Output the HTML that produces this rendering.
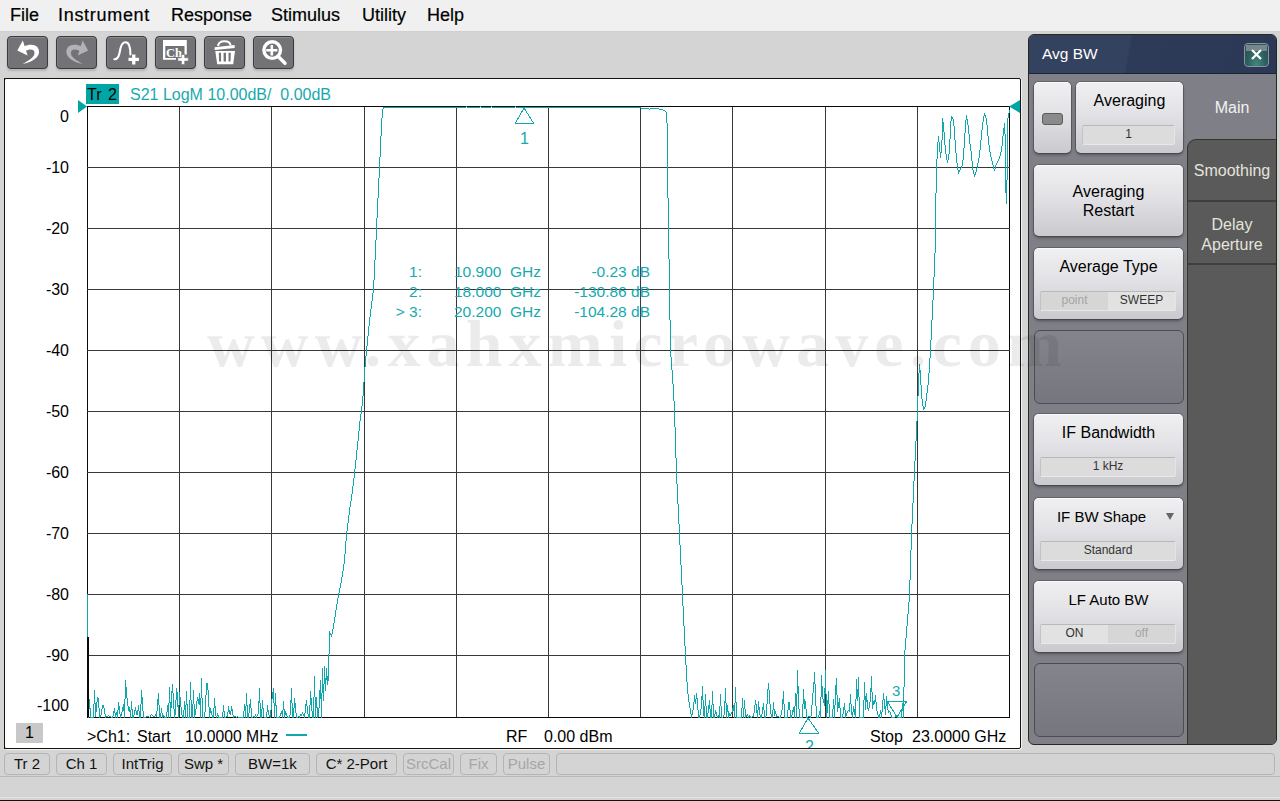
<!DOCTYPE html>
<html><head><meta charset="utf-8">
<style>
*{box-sizing:border-box}
html,body{margin:0;padding:0}
body{width:1280px;height:801px;position:relative;overflow:hidden;background:#d4d4d4;font-family:"Liberation Sans",sans-serif}
.abs{position:absolute}
#menu{position:absolute;left:0;top:0;width:1280px;height:31px;background:#f0f0f0}
#menu span{position:absolute;top:5px;font-size:18px;color:#000;white-space:nowrap;-webkit-text-stroke:0.2px #000}
.tb{position:absolute;top:36px;width:41px;height:33px;border-radius:4px;background:#737377;border:1px solid #3a3a3c;box-shadow:inset 0 1px 0 #8e8e92, inset 1px 0 0 #7e7e82, 0 2px 2px rgba(0,0,0,.15)}
.tb svg{position:absolute;left:0;top:0}
#chart{position:absolute;left:4px;top:78px;width:1017px;height:671px;background:#fff;border:1px solid #14140a;border-radius:2px;box-shadow:1px 1px 0 #f4f4f4}
.yl{position:absolute;left:20px;width:49px;text-align:right;font-size:16px;line-height:18px;color:#000}
.teal{color:#17a9b0}
.bt{position:absolute;top:728px;font-size:16px;line-height:18px;white-space:pre;color:#000}
#status .sb{position:absolute;top:753px;height:22px;border:1px solid #b4b4b4;border-radius:4px;background:#d4d4d4;font-size:15px;line-height:20px;text-align:center;color:#111}
#status .dis{color:#a6a6a6}
#panel{position:absolute;left:1028px;top:34px;width:249px;height:711px;background:#7f7f87;border:1px solid #2a2a1c;border-radius:6px;overflow:hidden}
#phead{position:absolute;left:0;top:0;width:247px;height:39px;background:linear-gradient(100deg,#33425f 0%,#33425f 40%,#2d3b58 41%,#2b3956 100%);border-bottom:1px solid #1d2436}
.pb{position:absolute;left:5px;width:149px;height:71px;border-radius:5px;background:linear-gradient(#f0f0f2 0%,#e2e2e6 45%,#cacace 100%);box-shadow:inset 0 1px 0 #fafafa, 0 2px 3px rgba(30,30,36,.45), 0 0 0 1px rgba(80,80,88,.6);font-size:16px;color:#000;text-align:center}
.pbd{position:absolute;left:5px;width:150px;height:74px;border-radius:6px;background:linear-gradient(#84848c,#76767e);border:1px solid #4c4c52}
.fld{position:absolute;left:6px;width:136px;height:20px;background:#dcdcdc;border:1px solid;border-color:#b8b8b8 #e4e4e4 #e8e8e8 #c2c2c2;border-radius:2px;font-size:12px;line-height:17px;color:#333}
.tabs{position:absolute;left:158px;width:90px;background:#5a5a5a;color:#e4e4dc;font-size:16px;text-align:center}
</style></head><body>
<div id="menu">
<span style="left:10px">File</span>
<span style="left:58px;letter-spacing:0.7px">Instrument</span>
<span style="left:171px">Response</span>
<span style="left:271px">Stimulus</span>
<span style="left:362px">Utility</span>
<span style="left:427px">Help</span>
</div>
<div style="position:absolute;left:0;top:31px;width:1280px;height:1px;background:#d0d0d0"></div>

<div class="tb" style="left:7px"></div>
<div class="tb" style="left:56px"></div>
<div class="tb" style="left:106px"></div>
<div class="tb" style="left:155px"></div>
<div class="tb" style="left:204px"></div>
<div class="tb" style="left:253px"></div>
<svg class="abs" style="left:0;top:0" width="300" height="78">
<path d="M17.3 50.4 L22.8 40.5 L27.6 55.5 Z" fill="#fff"/>
<path d="M23.5 46.5 C33 42.5 39.5 46 39 52.5 C38.5 58 32 62 22.5 64 C29 60.5 34.5 57 34.5 53 C34.5 49 30 48.5 25.5 51 Z" fill="#fff"/>
<path d="M88.1 50.4 L82.6 40.5 L77.8 55.5 Z" fill="#b3b3b5"/>
<path d="M81.9 46.5 C72.4 42.5 65.9 46 66.4 52.5 C66.9 58 73.4 62 82.9 64 C76.4 60.5 70.9 57 70.9 53 C70.9 49 75.4 48.5 79.9 51 Z" fill="#b3b3b5"/>
<path d="M114.4 59.3 C117.5 59.3 119 57 120.3 49 C121.5 43.5 123.5 42.3 125.5 42.3 C128.5 42.3 130.3 45 130.4 54.5" stroke="#fff" stroke-width="2.1" fill="none" stroke-linecap="round"/>
<path d="M132.1 54.5 h3.3 v3.3 h3.5 v3.3 h-3.5 v3.4 h-3.3 v-3.4 h-3.6 v-3.3 h3.6 z" fill="#fff"/>
<path d="M163 40 h23.8 v14.5 h-2.3 v-8.5 h-19.2 v11.9 h10.7 v1.9 h-13 z" fill="#fff"/>
<text x="166" y="56.8" font-family="Liberation Serif" font-weight="bold" font-size="12.5" fill="#fff" textLength="16" lengthAdjust="spacingAndGlyphs">Ch</text>
<path d="M181.4 54.5 h3.3 v3.3 h3.6 v3.3 h-3.6 v3.4 h-3.3 v-3.4 h-3.5 v-3.3 h3.5 z" fill="#fff" stroke="#737377" stroke-width="0.6"/>
<path d="M218 46 C218.5 42.5 221 41.2 224.3 41.2 C227.8 41.2 230.3 42.5 230.6 45.5" stroke="#fff" stroke-width="2" fill="none"/>
<path d="M214.6 47.3 L234.6 45 L234.7 48 L214.6 50 Z" fill="#fff"/>
<path d="M215.3 50.9 H235 L233.2 64.2 H217.2 Z" fill="#fff"/>
<path d="M218.8 52.8 h2.2 l0.1 8.8 h-2 z M223.6 52.8 h2.4 v8.8 h-2.4 z M228.5 52.8 h2.3 l-0.3 8.8 h-2 z" fill="#737377"/>
<circle cx="272.2" cy="50.1" r="8.3" stroke="#fff" stroke-width="3.4" fill="none"/>
<path d="M270.5 44.9 h2.6 v4 h4.3 v2.6 h-4.3 v4.1 h-2.6 v-4.1 h-4.3 v-2.6 h4.3 z" fill="#fff"/>
<path d="M279 57.3 L285 63.3" stroke="#fff" stroke-width="3.4" stroke-linecap="round"/>
</svg>
<div id="chart"></div>
<div style="position:absolute;left:86px;top:84px;width:33px;height:20px;background:#00a6a6"></div>
<div style="position:absolute;left:87px;top:85px;font-size:16px;line-height:20px;color:#000;word-spacing:2px">Tr 2</div>
<div class="teal" style="position:absolute;left:130px;top:85px;font-size:16px;line-height:20px;white-space:pre">S21 LogM 10.00dB/  0.00dB</div>
<div class="yl" style="top:108px">0</div>
<div class="yl" style="top:159px">-10</div>
<div class="yl" style="top:220px">-20</div>
<div class="yl" style="top:281px">-30</div>
<div class="yl" style="top:342px">-40</div>
<div class="yl" style="top:403px">-50</div>
<div class="yl" style="top:464px">-60</div>
<div class="yl" style="top:525px">-70</div>
<div class="yl" style="top:586px">-80</div>
<div class="yl" style="top:647px">-90</div>
<div class="yl" style="top:697px">-100</div>

<svg class="abs" style="left:0;top:0" width="1280" height="801">
<rect x="87" y="106" width="1" height="612" fill="#0a0a0a"/>
<rect x="179" y="106" width="1" height="612" fill="#383838"/>
<rect x="271" y="106" width="1" height="612" fill="#383838"/>
<rect x="364" y="106" width="1" height="612" fill="#383838"/>
<rect x="456" y="106" width="1" height="612" fill="#383838"/>
<rect x="548" y="106" width="1" height="612" fill="#383838"/>
<rect x="640" y="106" width="1" height="612" fill="#383838"/>
<rect x="732" y="106" width="1" height="612" fill="#383838"/>
<rect x="825" y="106" width="1" height="612" fill="#383838"/>
<rect x="917" y="106" width="1" height="612" fill="#383838"/>
<rect x="1009" y="106" width="1" height="612" fill="#0a0a0a"/>
<rect x="87" y="106" width="923" height="1" fill="#0a0a0a"/>
<rect x="87" y="167" width="923" height="1" fill="#383838"/>
<rect x="87" y="228" width="923" height="1" fill="#383838"/>
<rect x="87" y="289" width="923" height="1" fill="#383838"/>
<rect x="87" y="350" width="923" height="1" fill="#383838"/>
<rect x="87" y="411" width="923" height="1" fill="#383838"/>
<rect x="87" y="472" width="923" height="1" fill="#383838"/>
<rect x="87" y="533" width="923" height="1" fill="#383838"/>
<rect x="87" y="594" width="923" height="1" fill="#383838"/>
<rect x="87" y="655" width="923" height="1" fill="#383838"/>
<rect x="87" y="717" width="923" height="1" fill="#0a0a0a"/>
<rect x="4" y="78" width="1" height="671" fill="#14140a"/>
<polygon points="78,100 87,106.5 78,113" fill="#00a6a6"/>
<polygon points="1020,100 1009,106.5 1020,113" fill="#00a6a6"/>
<path d="M87 594h1v83h-1zM88 677h1v41h-1zM89 699h1v10h-1zM90 708h1v10h-1zM91 717h1v1h-1zM92 717h1v1h-1zM93 704h1v14h-1zM94 690h1v14h-1zM95 703h1v14h-1zM96 702h1v10h-1zM97 697h1v5h-1zM98 698h1v10h-1zM99 708h1v10h-1zM100 715h1v2h-1zM101 709h1v6h-1zM102 705h1v4h-1zM103 705h1v3h-1zM104 708h1v6h-1zM105 714h1v4h-1zM106 716h1v1h-1zM107 716h1v1h-1zM108 715h1v1h-1zM109 716h1v1h-1zM110 716h1v1h-1zM111 717h1v1h-1zM112 716h1v2h-1zM113 711h1v5h-1zM114 708h1v5h-1zM115 713h1v5h-1zM116 712h1v3h-1zM117 710h1v8h-1zM118 702h1v8h-1zM119 706h1v8h-1zM120 714h1v4h-1zM121 712h1v4h-1zM122 707h1v5h-1zM123 704h1v7h-1zM124 699h1v19h-1zM125 680h1v19h-1zM126 687h1v11h-1zM127 698h1v8h-1zM128 706h1v5h-1zM129 707h1v5h-1zM130 710h1v8h-1zM131 701h1v9h-1zM132 709h1v9h-1zM133 715h1v3h-1zM134 710h1v5h-1zM135 707h1v4h-1zM136 711h1v4h-1zM137 710h1v5h-1zM138 705h1v6h-1zM139 711h1v7h-1zM140 704h1v14h-1zM141 690h1v14h-1zM142 697h1v14h-1zM143 711h1v7h-1zM144 717h1v1h-1zM145 717h1v1h-1zM146 716h1v1h-1zM147 716h1v1h-1zM148 716h1v1h-1zM149 717h1v1h-1zM150 715h1v2h-1zM151 714h1v1h-1zM152 715h1v1h-1zM153 716h1v1h-1zM154 716h1v1h-1zM155 714h1v2h-1zM156 711h1v6h-1zM157 699h1v12h-1zM158 693h1v12h-1zM159 705h1v13h-1zM160 713h1v5h-1zM161 708h1v5h-1zM162 713h1v5h-1zM163 715h1v2h-1zM164 716h1v2h-1zM165 717h1v1h-1zM166 712h1v6h-1zM167 705h1v7h-1zM168 703h1v15h-1zM169 687h1v16h-1zM170 702h1v16h-1zM171 691h1v17h-1zM172 684h1v9h-1zM173 693h1v16h-1zM174 709h1v9h-1zM175 700h1v15h-1zM176 688h1v12h-1zM177 692h1v15h-1zM178 705h1v13h-1zM179 692h1v13h-1zM180 697h1v10h-1zM181 707h1v8h-1zM182 715h1v3h-1zM183 710h1v8h-1zM184 701h1v9h-1zM185 705h1v13h-1zM186 691h1v14h-1zM187 704h1v14h-1zM188 717h1v1h-1zM189 700h1v18h-1zM190 682h1v18h-1zM191 700h1v18h-1zM192 704h1v14h-1zM193 690h1v14h-1zM194 704h1v14h-1zM195 709h1v6h-1zM196 701h1v8h-1zM197 697h1v4h-1zM198 699h1v5h-1zM199 693h1v12h-1zM200 698h1v20h-1zM201 678h1v20h-1zM202 698h1v20h-1zM203 717h1v1h-1zM204 712h1v6h-1zM205 695h1v17h-1zM206 683h1v12h-1zM207 683h1v7h-1zM208 690h1v17h-1zM209 707h1v11h-1zM210 708h1v5h-1zM211 711h1v4h-1zM212 715h1v3h-1zM213 708h1v10h-1zM214 698h1v10h-1zM215 706h1v10h-1zM216 716h1v2h-1zM217 713h1v3h-1zM218 715h1v3h-1zM219 717h1v1h-1zM220 717h1v1h-1zM221 717h1v1h-1zM222 712h1v6h-1zM223 705h1v7h-1zM224 711h1v7h-1zM225 717h1v1h-1zM226 716h1v1h-1zM227 712h1v5h-1zM228 706h1v6h-1zM229 710h1v4h-1zM230 711h1v4h-1zM231 706h1v5h-1zM232 709h1v6h-1zM233 715h1v3h-1zM234 716h1v1h-1zM235 716h1v1h-1zM236 717h1v1h-1zM237 716h1v1h-1zM238 717h1v1h-1zM239 717h1v1h-1zM240 717h1v1h-1zM241 717h1v1h-1zM242 717h1v1h-1zM243 711h1v7h-1zM244 704h1v7h-1zM245 706h1v12h-1zM246 693h1v13h-1zM247 705h1v13h-1zM248 713h1v5h-1zM249 704h1v9h-1zM250 699h1v9h-1zM251 708h1v10h-1zM252 717h1v1h-1zM253 716h1v1h-1zM254 716h1v2h-1zM255 714h1v2h-1zM256 716h1v2h-1zM257 714h1v2h-1zM258 701h1v13h-1zM259 688h1v15h-1zM260 703h1v15h-1zM261 709h1v9h-1zM262 700h1v9h-1zM263 708h1v9h-1zM264 717h1v1h-1zM265 717h1v1h-1zM266 712h1v6h-1zM267 705h1v7h-1zM268 710h1v5h-1zM269 715h1v2h-1zM270 710h1v8h-1zM271 699h1v11h-1zM272 692h1v7h-1zM273 688h1v15h-1zM274 703h1v15h-1zM275 693h1v13h-1zM276 705h1v13h-1zM277 717h1v1h-1zM278 717h1v1h-1zM279 716h1v2h-1zM280 713h1v3h-1zM281 711h1v3h-1zM282 710h1v8h-1zM283 701h1v9h-1zM284 709h1v9h-1zM285 711h1v4h-1zM286 713h1v3h-1zM287 716h1v2h-1zM288 717h1v1h-1zM289 715h1v3h-1zM290 700h1v15h-1zM291 688h1v15h-1zM292 703h1v15h-1zM293 708h1v10h-1zM294 698h1v10h-1zM295 703h1v10h-1zM296 713h1v5h-1zM297 717h1v1h-1zM298 716h1v1h-1zM299 716h1v2h-1zM300 714h1v2h-1zM301 714h1v2h-1zM302 712h1v2h-1zM303 714h1v2h-1zM304 713h1v5h-1zM305 704h1v9h-1zM306 700h1v6h-1zM307 706h1v8h-1zM308 714h1v4h-1zM309 705h1v13h-1zM310 691h1v14h-1zM311 698h1v13h-1zM312 711h1v7h-1zM313 697h1v21h-1zM314 676h1v21h-1zM315 697h1v21h-1zM316 697h1v11h-1zM317 707h1v11h-1zM318 708h1v9h-1zM319 690h1v18h-1zM320 680h1v19h-1zM321 693h1v25h-1zM322 668h1v25h-1zM323 684h1v17h-1zM324 666h1v18h-1zM325 678h1v13h-1zM326 668h1v12h-1zM327 676h1v9h-1zM328 654h1v27h-1zM329 631h1v23h-1zM330 633h1v2h-1zM331 634h1v3h-1zM332 629h1v5h-1zM333 623h1v6h-1zM334 617h1v6h-1zM335 610h1v7h-1zM336 604h1v6h-1zM337 598h1v6h-1zM338 593h1v5h-1zM339 588h1v5h-1zM340 583h1v5h-1zM341 577h1v6h-1zM342 571h1v6h-1zM343 564h1v7h-1zM344 554h1v10h-1zM345 541h1v13h-1zM346 531h1v10h-1zM347 523h1v8h-1zM348 515h1v8h-1zM349 507h1v8h-1zM350 501h1v6h-1zM351 494h1v7h-1zM352 486h1v8h-1zM353 478h1v8h-1zM354 469h1v9h-1zM355 460h1v9h-1zM356 450h1v10h-1zM357 441h1v9h-1zM358 431h1v10h-1zM359 421h1v10h-1zM360 414h1v7h-1zM361 406h1v8h-1zM362 396h1v10h-1zM363 382h1v14h-1zM364 367h1v15h-1zM365 356h1v11h-1zM366 346h1v10h-1zM367 336h1v10h-1zM368 326h1v10h-1zM369 317h1v9h-1zM370 309h1v8h-1zM371 301h1v8h-1zM372 293h1v8h-1zM373 280h1v13h-1zM374 260h1v20h-1zM375 240h1v20h-1zM376 218h1v22h-1zM377 198h1v20h-1zM378 178h1v20h-1zM379 157h1v21h-1zM380 136h1v21h-1zM381 118h1v18h-1zM382 109h1v9h-1zM383 107h1v2h-1zM384 107h1v1h-1zM385 107h1v1h-1zM386 107h1v1h-1zM387 107h1v1h-1zM388 107h1v1h-1zM389 107h1v1h-1zM390 107h1v1h-1zM391 107h1v1h-1zM392 107h1v1h-1zM393 107h1v1h-1zM394 107h1v1h-1zM395 107h1v1h-1zM396 107h1v1h-1zM397 107h1v1h-1zM398 107h1v1h-1zM399 107h1v1h-1zM400 107h1v1h-1zM401 107h1v1h-1zM402 107h1v1h-1zM403 107h1v1h-1zM404 107h1v1h-1zM405 107h1v1h-1zM406 107h1v1h-1zM407 107h1v1h-1zM408 107h1v1h-1zM409 107h1v1h-1zM410 107h1v1h-1zM411 107h1v1h-1zM412 107h1v1h-1zM413 107h1v1h-1zM414 107h1v1h-1zM415 107h1v1h-1zM416 107h1v1h-1zM417 107h1v1h-1zM418 107h1v1h-1zM419 107h1v1h-1zM420 107h1v1h-1zM421 107h1v1h-1zM422 107h1v1h-1zM423 107h1v1h-1zM424 107h1v1h-1zM425 107h1v1h-1zM426 107h1v1h-1zM427 107h1v1h-1zM428 107h1v1h-1zM429 107h1v1h-1zM430 107h1v1h-1zM431 107h1v1h-1zM432 107h1v1h-1zM433 107h1v1h-1zM434 107h1v1h-1zM435 107h1v1h-1zM436 107h1v1h-1zM437 107h1v1h-1zM438 107h1v1h-1zM439 107h1v1h-1zM440 107h1v1h-1zM441 107h1v1h-1zM442 107h1v1h-1zM443 107h1v1h-1zM444 107h1v1h-1zM445 107h1v1h-1zM446 107h1v1h-1zM447 107h1v1h-1zM448 107h1v1h-1zM449 107h1v1h-1zM450 107h1v1h-1zM451 107h1v1h-1zM452 107h1v1h-1zM453 107h1v1h-1zM454 107h1v1h-1zM455 107h1v1h-1zM456 107h1v1h-1zM457 107h1v1h-1zM458 107h1v1h-1zM459 107h1v1h-1zM460 107h1v1h-1zM461 107h1v1h-1zM462 107h1v1h-1zM463 107h1v1h-1zM464 107h1v1h-1zM465 107h1v1h-1zM466 106h1v1h-1zM467 107h1v1h-1zM468 107h1v1h-1zM469 107h1v1h-1zM470 107h1v1h-1zM471 107h1v1h-1zM472 107h1v1h-1zM473 107h1v1h-1zM474 107h1v1h-1zM475 107h1v1h-1zM476 107h1v1h-1zM477 107h1v1h-1zM478 107h1v1h-1zM479 107h1v1h-1zM480 106h1v1h-1zM481 107h1v1h-1zM482 107h1v1h-1zM483 107h1v1h-1zM484 107h1v1h-1zM485 107h1v1h-1zM486 107h1v1h-1zM487 107h1v1h-1zM488 107h1v1h-1zM489 107h1v1h-1zM490 107h1v1h-1zM491 106h1v1h-1zM492 107h1v1h-1zM493 107h1v1h-1zM494 107h1v1h-1zM495 107h1v1h-1zM496 107h1v1h-1zM497 107h1v1h-1zM498 107h1v1h-1zM499 107h1v1h-1zM500 107h1v1h-1zM501 107h1v1h-1zM502 107h1v1h-1zM503 107h1v1h-1zM504 107h1v1h-1zM505 107h1v1h-1zM506 107h1v1h-1zM507 107h1v1h-1zM508 107h1v1h-1zM509 107h1v1h-1zM510 107h1v1h-1zM511 107h1v1h-1zM512 107h1v1h-1zM513 107h1v1h-1zM514 107h1v1h-1zM515 106h1v1h-1zM516 107h1v1h-1zM517 107h1v1h-1zM518 107h1v1h-1zM519 107h1v1h-1zM520 107h1v1h-1zM521 107h1v1h-1zM522 107h1v1h-1zM523 107h1v1h-1zM524 107h1v1h-1zM525 107h1v1h-1zM526 107h1v1h-1zM527 107h1v1h-1zM528 107h1v1h-1zM529 107h1v1h-1zM530 107h1v1h-1zM531 107h1v1h-1zM532 107h1v1h-1zM533 107h1v1h-1zM534 107h1v1h-1zM535 107h1v1h-1zM536 107h1v1h-1zM537 107h1v1h-1zM538 107h1v1h-1zM539 107h1v1h-1zM540 107h1v1h-1zM541 107h1v1h-1zM542 107h1v1h-1zM543 107h1v1h-1zM544 107h1v1h-1zM545 107h1v1h-1zM546 107h1v1h-1zM547 107h1v1h-1zM548 107h1v1h-1zM549 107h1v1h-1zM550 107h1v1h-1zM551 107h1v1h-1zM552 107h1v1h-1zM553 107h1v1h-1zM554 107h1v1h-1zM555 107h1v1h-1zM556 107h1v1h-1zM557 107h1v1h-1zM558 107h1v1h-1zM559 107h1v1h-1zM560 107h1v1h-1zM561 107h1v1h-1zM562 107h1v1h-1zM563 107h1v1h-1zM564 107h1v1h-1zM565 107h1v1h-1zM566 107h1v1h-1zM567 107h1v1h-1zM568 107h1v1h-1zM569 107h1v1h-1zM570 107h1v1h-1zM571 107h1v1h-1zM572 107h1v1h-1zM573 107h1v1h-1zM574 107h1v1h-1zM575 107h1v1h-1zM576 107h1v1h-1zM577 107h1v1h-1zM578 107h1v1h-1zM579 107h1v1h-1zM580 107h1v1h-1zM581 107h1v1h-1zM582 107h1v1h-1zM583 107h1v1h-1zM584 107h1v1h-1zM585 107h1v1h-1zM586 107h1v1h-1zM587 107h1v1h-1zM588 107h1v1h-1zM589 107h1v1h-1zM590 107h1v1h-1zM591 107h1v1h-1zM592 107h1v1h-1zM593 107h1v1h-1zM594 107h1v1h-1zM595 107h1v1h-1zM596 107h1v1h-1zM597 107h1v1h-1zM598 107h1v1h-1zM599 107h1v1h-1zM600 107h1v1h-1zM601 107h1v1h-1zM602 107h1v1h-1zM603 107h1v1h-1zM604 107h1v1h-1zM605 107h1v1h-1zM606 107h1v1h-1zM607 107h1v1h-1zM608 107h1v1h-1zM609 107h1v1h-1zM610 107h1v1h-1zM611 107h1v1h-1zM612 107h1v1h-1zM613 107h1v1h-1zM614 107h1v1h-1zM615 107h1v1h-1zM616 107h1v1h-1zM617 107h1v1h-1zM618 107h1v1h-1zM619 107h1v1h-1zM620 107h1v1h-1zM621 107h1v1h-1zM622 107h1v1h-1zM623 107h1v1h-1zM624 107h1v1h-1zM625 107h1v1h-1zM626 107h1v1h-1zM627 107h1v1h-1zM628 107h1v1h-1zM629 107h1v1h-1zM630 107h1v1h-1zM631 107h1v1h-1zM632 107h1v1h-1zM633 107h1v1h-1zM634 107h1v1h-1zM635 107h1v1h-1zM636 107h1v1h-1zM637 107h1v1h-1zM638 107h1v1h-1zM639 107h1v1h-1zM640 107h1v1h-1zM641 108h1v1h-1zM642 108h1v1h-1zM643 108h1v1h-1zM644 108h1v1h-1zM645 108h1v1h-1zM646 108h1v1h-1zM647 108h1v1h-1zM648 108h1v1h-1zM649 109h1v1h-1zM650 108h1v1h-1zM651 108h1v1h-1zM652 108h1v1h-1zM653 108h1v1h-1zM654 108h1v1h-1zM655 108h1v1h-1zM656 108h1v1h-1zM657 108h1v1h-1zM658 108h1v1h-1zM659 109h1v1h-1zM660 109h1v1h-1zM661 109h1v1h-1zM662 109h1v1h-1zM663 110h1v1h-1zM664 110h1v1h-1zM665 111h1v1h-1zM666 112h1v11h-1zM667 123h1v75h-1zM668 198h1v61h-1zM669 259h1v61h-1zM670 320h1v37h-1zM671 357h1v13h-1zM672 370h1v14h-1zM673 384h1v17h-1zM674 401h1v26h-1zM675 427h1v31h-1zM676 458h1v26h-1zM677 484h1v20h-1zM678 504h1v20h-1zM679 524h1v21h-1zM680 545h1v20h-1zM681 565h1v20h-1zM682 585h1v21h-1zM683 606h1v20h-1zM684 626h1v20h-1zM685 646h1v19h-1zM686 665h1v17h-1zM687 682h1v12h-1zM688 694h1v8h-1zM689 702h1v6h-1zM690 708h1v6h-1zM691 714h1v4h-1zM692 710h1v5h-1zM693 702h1v8h-1zM694 695h1v7h-1zM695 699h1v5h-1zM696 693h1v6h-1zM697 698h1v12h-1zM698 710h1v8h-1zM699 715h1v3h-1zM700 709h1v6h-1zM701 696h1v13h-1zM702 686h1v14h-1zM703 700h1v16h-1zM704 706h1v12h-1zM705 694h1v12h-1zM706 706h1v12h-1zM707 713h1v5h-1zM708 705h1v8h-1zM709 700h1v9h-1zM710 709h1v9h-1zM711 705h1v13h-1zM712 691h1v14h-1zM713 704h1v14h-1zM714 714h1v4h-1zM715 710h1v4h-1zM716 712h1v4h-1zM717 716h1v2h-1zM718 715h1v2h-1zM719 706h1v12h-1zM720 694h1v12h-1zM721 706h1v12h-1zM722 717h1v1h-1zM723 715h1v2h-1zM724 701h1v14h-1zM725 688h1v15h-1zM726 703h1v15h-1zM727 705h1v7h-1zM728 711h1v7h-1zM729 713h1v3h-1zM730 714h1v2h-1zM731 712h1v2h-1zM732 708h1v4h-1zM733 705h1v6h-1zM734 703h1v15h-1zM735 687h1v16h-1zM736 702h1v16h-1zM737 717h1v1h-1zM738 717h1v1h-1zM739 717h1v1h-1zM740 717h1v1h-1zM741 708h1v10h-1zM742 698h1v10h-1zM743 708h1v10h-1zM744 700h1v9h-1zM745 709h1v9h-1zM746 715h1v2h-1zM747 714h1v2h-1zM748 716h1v2h-1zM749 715h1v2h-1zM750 716h1v2h-1zM751 717h1v1h-1zM752 716h1v1h-1zM753 713h1v4h-1zM754 705h1v8h-1zM755 700h1v5h-1zM756 704h1v9h-1zM757 710h1v8h-1zM758 701h1v9h-1zM759 707h1v8h-1zM760 715h1v3h-1zM761 714h1v4h-1zM762 707h1v7h-1zM763 703h1v7h-1zM764 710h1v8h-1zM765 716h1v2h-1zM766 704h1v12h-1zM767 689h1v15h-1zM768 683h1v7h-1zM769 690h1v14h-1zM770 704h1v10h-1zM771 714h1v4h-1zM772 710h1v8h-1zM773 702h1v8h-1zM774 709h1v7h-1zM775 711h1v3h-1zM776 714h1v3h-1zM777 716h1v1h-1zM778 716h1v1h-1zM779 717h1v1h-1zM780 715h1v3h-1zM781 710h1v5h-1zM782 699h1v11h-1zM783 691h1v13h-1zM784 704h1v14h-1zM785 717h1v1h-1zM786 717h1v1h-1zM787 710h1v8h-1zM788 702h1v8h-1zM789 702h1v8h-1zM790 710h1v8h-1zM791 715h1v3h-1zM792 710h1v5h-1zM793 707h1v5h-1zM794 706h1v12h-1zM795 693h1v13h-1zM796 694h1v24h-1zM797 670h1v24h-1zM798 686h1v23h-1zM799 709h1v9h-1zM800 717h1v1h-1zM801 717h1v1h-1zM802 704h1v14h-1zM803 689h1v15h-1zM804 699h1v10h-1zM805 701h1v8h-1zM806 709h1v9h-1zM807 717h1v1h-1zM808 716h1v1h-1zM809 716h1v1h-1zM810 716h1v2h-1zM811 705h1v11h-1zM812 693h1v12h-1zM813 682h1v11h-1zM814 672h1v12h-1zM815 684h1v22h-1zM816 706h1v12h-1zM817 717h1v1h-1zM818 715h1v3h-1zM819 711h1v4h-1zM820 697h1v21h-1zM821 675h1v22h-1zM822 686h1v13h-1zM823 699h1v4h-1zM824 688h1v18h-1zM825 670h1v24h-1zM826 694h1v24h-1zM827 700h1v13h-1zM828 691h1v13h-1zM829 704h1v14h-1zM830 717h1v1h-1zM831 717h1v1h-1zM832 709h1v9h-1zM833 699h1v10h-1zM834 705h1v13h-1zM835 685h1v20h-1zM836 678h1v17h-1zM837 695h1v17h-1zM838 702h1v6h-1zM839 698h1v10h-1zM840 708h1v10h-1zM841 717h1v1h-1zM842 714h1v4h-1zM843 707h1v7h-1zM844 703h1v7h-1zM845 710h1v8h-1zM846 713h1v3h-1zM847 711h1v2h-1zM848 710h1v1h-1zM849 703h1v9h-1zM850 694h1v10h-1zM851 704h1v11h-1zM852 712h1v6h-1zM853 706h1v6h-1zM854 709h1v6h-1zM855 699h1v19h-1zM856 679h1v20h-1zM857 689h1v12h-1zM858 677h1v20h-1zM859 697h1v21h-1zM860 717h1v1h-1zM861 717h1v1h-1zM862 717h1v1h-1zM863 700h1v18h-1zM864 682h1v18h-1zM865 696h1v14h-1zM866 693h1v9h-1zM867 700h1v9h-1zM868 708h1v3h-1zM869 702h1v6h-1zM870 688h1v14h-1zM871 676h1v16h-1zM872 692h1v17h-1zM873 701h1v4h-1zM874 700h1v4h-1zM875 695h1v7h-1zM876 702h1v9h-1zM877 711h1v4h-1zM878 715h1v3h-1zM879 714h1v4h-1zM880 710h1v4h-1zM881 712h1v6h-1zM882 700h1v12h-1zM883 693h1v7h-1zM884 699h1v10h-1zM885 706h1v9h-1zM886 696h1v10h-1zM887 702h1v8h-1zM888 710h1v3h-1zM889 711h1v1h-1zM890 712h1v3h-1zM891 715h1v3h-1zM892 717h1v1h-1zM893 717h1v1h-1zM894 717h1v1h-1zM895 716h1v1h-1zM896 715h1v1h-1zM897 716h1v2h-1zM898 717h1v1h-1zM899 717h1v1h-1zM900 717h1v1h-1zM901 711h1v7h-1zM902 703h1v8h-1zM903 687h1v31h-1zM904 650h1v37h-1zM905 638h1v12h-1zM906 626h1v12h-1zM907 614h1v12h-1zM908 602h1v12h-1zM909 580h1v22h-1zM910 550h1v30h-1zM911 524h1v26h-1zM912 503h1v21h-1zM913 481h1v22h-1zM914 461h1v20h-1zM915 441h1v20h-1zM916 421h1v20h-1zM917 396h1v25h-1zM918 373h1v23h-1zM919 364h1v9h-1zM920 370h1v15h-1zM921 385h1v14h-1zM922 399h1v7h-1zM923 406h1v4h-1zM924 407h1v2h-1zM925 401h1v6h-1zM926 393h1v8h-1zM927 385h1v8h-1zM928 373h1v12h-1zM929 358h1v15h-1zM930 340h1v18h-1zM931 320h1v20h-1zM932 300h1v20h-1zM933 277h1v23h-1zM934 253h1v24h-1zM935 193h1v60h-1zM936 159h1v34h-1zM937 142h1v17h-1zM938 136h1v6h-1zM939 142h1v10h-1zM940 152h1v6h-1zM941 140h1v13h-1zM942 118h1v22h-1zM943 122h1v10h-1zM944 132h1v13h-1zM945 145h1v9h-1zM946 154h1v6h-1zM947 160h1v3h-1zM948 154h1v6h-1zM949 139h1v15h-1zM950 121h1v18h-1zM951 116h1v5h-1zM952 117h1v2h-1zM953 119h1v7h-1zM954 126h1v14h-1zM955 140h1v13h-1zM956 153h1v10h-1zM957 163h1v7h-1zM958 170h1v4h-1zM959 170h1v2h-1zM960 168h1v2h-1zM961 166h1v2h-1zM962 160h1v6h-1zM963 148h1v12h-1zM964 133h1v15h-1zM965 120h1v13h-1zM966 115h1v5h-1zM967 119h1v6h-1zM968 125h1v9h-1zM969 134h1v10h-1zM970 144h1v7h-1zM971 151h1v10h-1zM972 161h1v9h-1zM973 170h1v4h-1zM974 174h1v3h-1zM975 172h1v3h-1zM976 168h1v4h-1zM977 163h1v5h-1zM978 158h1v5h-1zM979 150h1v8h-1zM980 140h1v10h-1zM981 130h1v10h-1zM982 122h1v8h-1zM983 116h1v6h-1zM984 113h1v3h-1zM985 115h1v3h-1zM986 118h1v7h-1zM987 125h1v11h-1zM988 136h1v9h-1zM989 145h1v7h-1zM990 152h1v5h-1zM991 157h1v4h-1zM992 161h1v4h-1zM993 165h1v4h-1zM994 169h1v2h-1zM995 165h1v4h-1zM996 163h1v2h-1zM997 161h1v2h-1zM998 159h1v2h-1zM999 156h1v3h-1zM1000 152h1v4h-1zM1001 146h1v6h-1zM1002 136h1v10h-1zM1003 128h1v8h-1zM1004 123h1v11h-1zM1005 134h1v59h-1zM1006 180h1v24h-1zM1007 118h1v62h-1zM1008 113h1v5h-1zM1009 110h1v3h-1z" fill="#11a8ad"/>
<rect x="87" y="637" width="2" height="80" fill="#0a0a0a"/>
<polygon points="524,108 515.5,123 533.5,123" fill="none" stroke="#11a8ad" stroke-width="1" shape-rendering="crispEdges"/>
<polygon points="808,718 799.5,733 818.5,733" fill="none" stroke="#11a8ad" stroke-width="1" shape-rendering="crispEdges"/>
<polygon points="897,717 887,701 907,701" fill="none" stroke="#11a8ad" stroke-width="1" shape-rendering="crispEdges"/>
<line x1="286" y1="735" x2="307" y2="735" stroke="#11a8ad" stroke-width="2"/>
</svg>
<div class="teal" style="position:absolute;left:520px;top:130px;font-size:16px;line-height:18px">1</div>
<div class="teal" style="position:absolute;left:805px;top:738px;font-size:16px;line-height:18px;height:10px;overflow:hidden">2</div>
<div class="teal" style="position:absolute;left:892px;top:682px;font-size:15px;line-height:18px">3</div>

<div class="teal" style="position:absolute;left:380px;top:262px;width:280px;height:60px;font-size:15.5px;line-height:20px;white-space:pre"><div style="position:absolute;left:0;top:0;width:42px;text-align:right">1:</div><div style="position:absolute;left:74px;top:0">10.900  GHz</div><div style="position:absolute;left:150px;top:0;width:120px;text-align:right">-0.23 dB</div><div style="position:absolute;left:0;top:20px;width:42px;text-align:right">2:</div><div style="position:absolute;left:74px;top:20px">18.000  GHz</div><div style="position:absolute;left:150px;top:20px;width:120px;text-align:right">-130.86 dB</div><div style="position:absolute;left:0;top:40px;width:42px;text-align:right">&gt; 3:</div><div style="position:absolute;left:74px;top:40px">20.200  GHz</div><div style="position:absolute;left:150px;top:40px;width:120px;text-align:right">-104.28 dB</div></div>
<div class="bt" style="left:87px">&gt;Ch1:</div>
<div class="bt" style="left:137px">Start</div>
<div class="bt" style="left:185px;font-size:15.7px">10.0000 MHz</div>
<div class="bt" style="left:506px">RF</div>
<div class="bt" style="left:544px">0.00 dBm</div>
<div class="bt" style="left:870px">Stop</div>
<div class="bt" style="left:912px">23.0000 GHz</div>
<div style="position:absolute;left:16px;top:723px;width:27px;height:20px;background:#c8c8c8;font-size:16px;line-height:20px;text-align:center">1</div>

<div id="status">
<div class="sb" style="left:4px;width:46px">Tr 2</div>
<div class="sb" style="left:56px;width:51px">Ch 1</div>
<div class="sb" style="left:113px;width:59px">IntTrig</div>
<div class="sb" style="left:178px;width:51px">Swp *</div>
<div class="sb" style="left:235px;width:75px">BW=1k</div>
<div class="sb" style="left:316px;width:81px">C* 2-Port</div>
<div class="sb dis" style="left:403px;width:51px">SrcCal</div>
<div class="sb dis" style="left:460px;width:37px">Fix</div>
<div class="sb dis" style="left:503px;width:47px">Pulse</div>
<div class="sb" style="left:556px;width:719px"></div>
</div>
<div style="position:absolute;left:0;top:776px;width:1280px;height:1px;background:#b8b8b8"></div>
<div style="position:absolute;left:0;top:797px;width:1280px;height:1px;background:#e4e4e4"></div>
<div style="position:absolute;left:0;top:800px;width:1280px;height:1px;background:#111"></div>

<div id="panel">
<div id="phead"></div>
<div style="position:absolute;left:13px;top:9px;font-size:15.5px;line-height:20px;color:#fff">Avg BW</div>
<div style="position:absolute;left:215px;top:8px;width:25px;height:24px;border-radius:4px;border:1px solid #8d939c;background:radial-gradient(ellipse at 50% 100%,#3f8a80 0%,#2d5c5c 60%,#2a4f55 100%);overflow:hidden"><div style="position:absolute;left:1px;top:1px;width:21px;height:6px;background:#76878f"></div><svg style="position:absolute;left:0;top:0" width="23" height="22"><path d="M7 6 L16 15 M16 6 L7 15" stroke="#fff" stroke-width="2.2"/></svg></div>
<div class="tabs" style="top:104px;height:63px;border-top-left-radius:9px;border:1px solid #35352a;border-right:none;border-bottom:2px solid #3e3e3e"></div>
<div class="tabs" style="top:167px;height:63px;border-left:1px solid #35352a;border-bottom:2px solid #3e3e3e"></div>
<div class="tabs" style="top:230px;height:480px;border-left:1px solid #35352a"></div>
<div style="position:absolute;left:158px;top:64px;width:90px;text-align:center;font-size:16px;color:#f2f2f2">Main</div>
<div style="position:absolute;left:158px;top:127px;width:90px;text-align:center;font-size:16px;color:#e4e4dc">Smoothing</div>
<div style="position:absolute;left:158px;top:180px;width:90px;text-align:center;font-size:16px;line-height:20px;color:#e4e4dc">Delay<br>Aperture</div>

<div class="pb" style="top:47px;width:37px"><div style="position:absolute;left:8px;top:31px;width:21px;height:12px;border-radius:3px;background:#8a8a8a;border:1px solid #5c5c5c"></div></div>
<div class="pb" style="left:47px;top:47px;width:107px"><div style="position:absolute;left:0;top:9px;width:100%;line-height:20px">Averaging</div><div class="fld" style="top:43px;width:93px">1</div></div>
<div class="pb" style="top:130px"><div style="position:absolute;left:0;top:17px;width:100%;line-height:19px">Averaging<br>Restart</div></div>
<div class="pb" style="top:213px"><div style="position:absolute;left:0;top:9px;width:100%;line-height:20px">Average Type</div><div class="fld" style="top:43px;display:flex;background:#d6d6d6"><div style="width:68px;color:#a4a4a4">point</div><div style="width:68px;background:#e2e2e2">SWEEP</div></div></div>
<div class="pbd" style="top:295px"></div>
<div class="pb" style="top:379px"><div style="position:absolute;left:0;top:9px;width:100%;line-height:20px">IF Bandwidth</div><div class="fld" style="top:43px">1 kHz</div></div>
<div class="pb" style="top:463px"><div style="position:absolute;left:0;top:9px;width:100%;line-height:20px;padding-right:14px;font-size:15px">IF BW Shape</div><div style="position:absolute;left:132px;top:15px;width:0;height:0;border-left:4px solid transparent;border-right:4px solid transparent;border-top:7px solid #666"></div><div class="fld" style="top:43px">Standard</div></div>
<div class="pb" style="top:546px"><div style="position:absolute;left:0;top:9px;width:100%;line-height:20px;font-size:15px">LF Auto BW</div><div class="fld" style="top:43px;display:flex;background:#d6d6d6"><div style="width:68px;background:#e2e2e2">ON</div><div style="width:68px;color:#a4a4a4">off</div></div></div>
<div class="pbd" style="top:628px"></div>
</div>
<div style="position:absolute;left:207px;top:294px;font-family:'Liberation Serif',serif;font-weight:bold;font-size:66px;line-height:100px;letter-spacing:6.15px;color:rgba(0,0,0,0.08);pointer-events:none;white-space:nowrap">www.xahxmicrowave.com</div>
</body></html>
